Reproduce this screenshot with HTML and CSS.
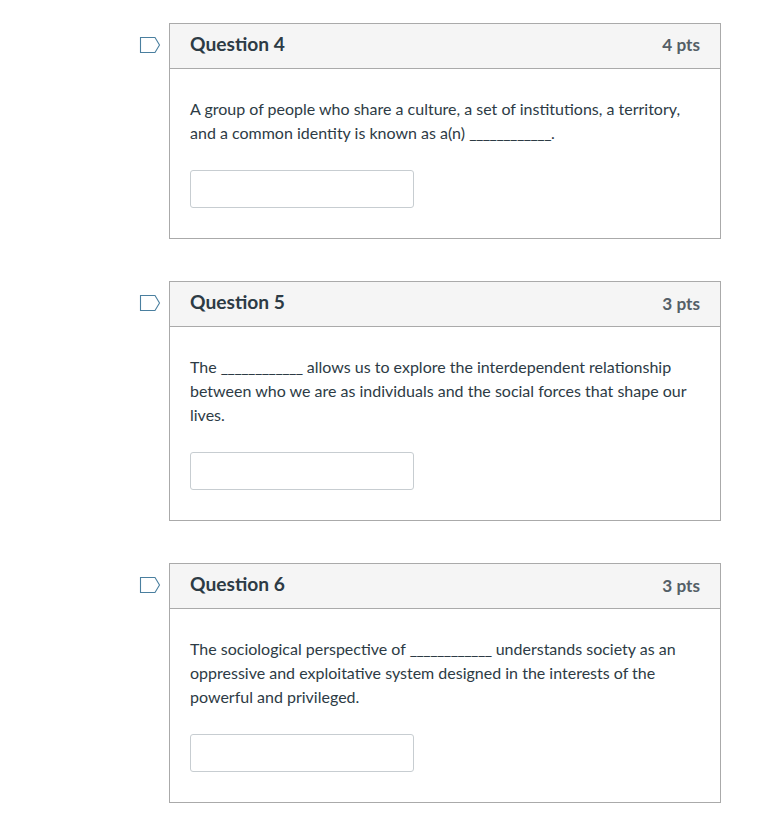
FILE: index.html
```html
<!DOCTYPE html>
<html lang="en">
<head>
  <meta charset="UTF-8">
  <meta name="viewport" content="width=device-width, initial-scale=1.0">
  <title>Quiz</title>
  <link rel="stylesheet" href="styles.css">
</head>
<body>
  <div class="quiz">
    <div class="question-row">
      <svg class="flag" width="22" height="18" viewBox="0 0 22 18"><path d="M1.5 1.5H16L20.5 9L16 16.5H1.5Z"/></svg>
      <div class="question">
        <div class="question-header">
          <span class="question-name">Question 4</span>
          <span class="question-pts">4 pts</span>
        </div>
        <div class="question-body">
          <p class="question-text">A group of people who share a culture, a set of institutions, a territory, and a common identity is known as a(n) <span class="blank">____________</span>.</p>
          <input class="answer" type="text">
        </div>
      </div>
    </div>

    <div class="question-row">
      <svg class="flag" width="22" height="18" viewBox="0 0 22 18"><path d="M1.5 1.5H16L20.5 9L16 16.5H1.5Z"/></svg>
      <div class="question">
        <div class="question-header">
          <span class="question-name">Question 5</span>
          <span class="question-pts">3 pts</span>
        </div>
        <div class="question-body">
          <p class="question-text">The <span class="blank">____________</span> allows us to explore the interdependent relationship between who we are as individuals and the social forces that shape our lives.</p>
          <input class="answer" type="text">
        </div>
      </div>
    </div>

    <div class="question-row">
      <svg class="flag" width="22" height="18" viewBox="0 0 22 18"><path d="M1.5 1.5H16L20.5 9L16 16.5H1.5Z"/></svg>
      <div class="question">
        <div class="question-header">
          <span class="question-name">Question 6</span>
          <span class="question-pts">3 pts</span>
        </div>
        <div class="question-body">
          <p class="question-text">The sociological perspective of <span class="blank">____________</span> understands society as an oppressive and exploitative system designed in the interests of the powerful and privileged.</p>
          <input class="answer" type="text">
        </div>
      </div>
    </div>
  </div>
</body>
</html>
```

FILE: styles.css
```css
body {
  font-family: Lato, "Open Sans", sans-serif;
  margin: 0;
  background-color: #fff;
  color: #2d3b45;
}

.quiz {
  display: flex;
  flex-direction: column;
  gap: 42px;
  padding: 23px 58px 29px 139px;
}

.question-row {
  display: flex;
  align-items: flex-start;
}

.flag {
  flex: none;
  width: 22px;
  height: 18px;
  margin-top: 13px;
  margin-right: 8px;
}

.flag path {
  fill: none;
  stroke: #4a7f9f;
  stroke-width: 1.1;
}

.question {
  flex: 1;
  border: 1px solid #aaa;
}

.question-header {
  display: flex;
  justify-content: space-between;
  align-items: center;
  height: 44px;
  padding: 0 20px;
  background-color: #f5f5f5;
  border-bottom: 1px solid #aaa;
}

.question-name {
  font-size: 19.2px;
  font-weight: 700;
  margin-top: -6px;
}

.question-pts {
  font-size: 17.2px;
  font-weight: 700;
  color: #545f67;
  margin-top: -2px;
}

.question-row:first-child .question-pts {
  margin-top: -4px;
}

.question-body {
  padding: 28px 20px 30px;
}

.question-text {
  margin: 0 0 25px;
  font-size: 16px;
  line-height: 24px;
}

.blank {
  letter-spacing: -0.52px;
}

.answer {
  display: block;
  width: 224px;
  height: 38px;
  padding: 0 10px;
  box-sizing: border-box;
  border: 1px solid #c7cdd1;
  border-radius: 3px;
  background-color: #fff;
}
```
